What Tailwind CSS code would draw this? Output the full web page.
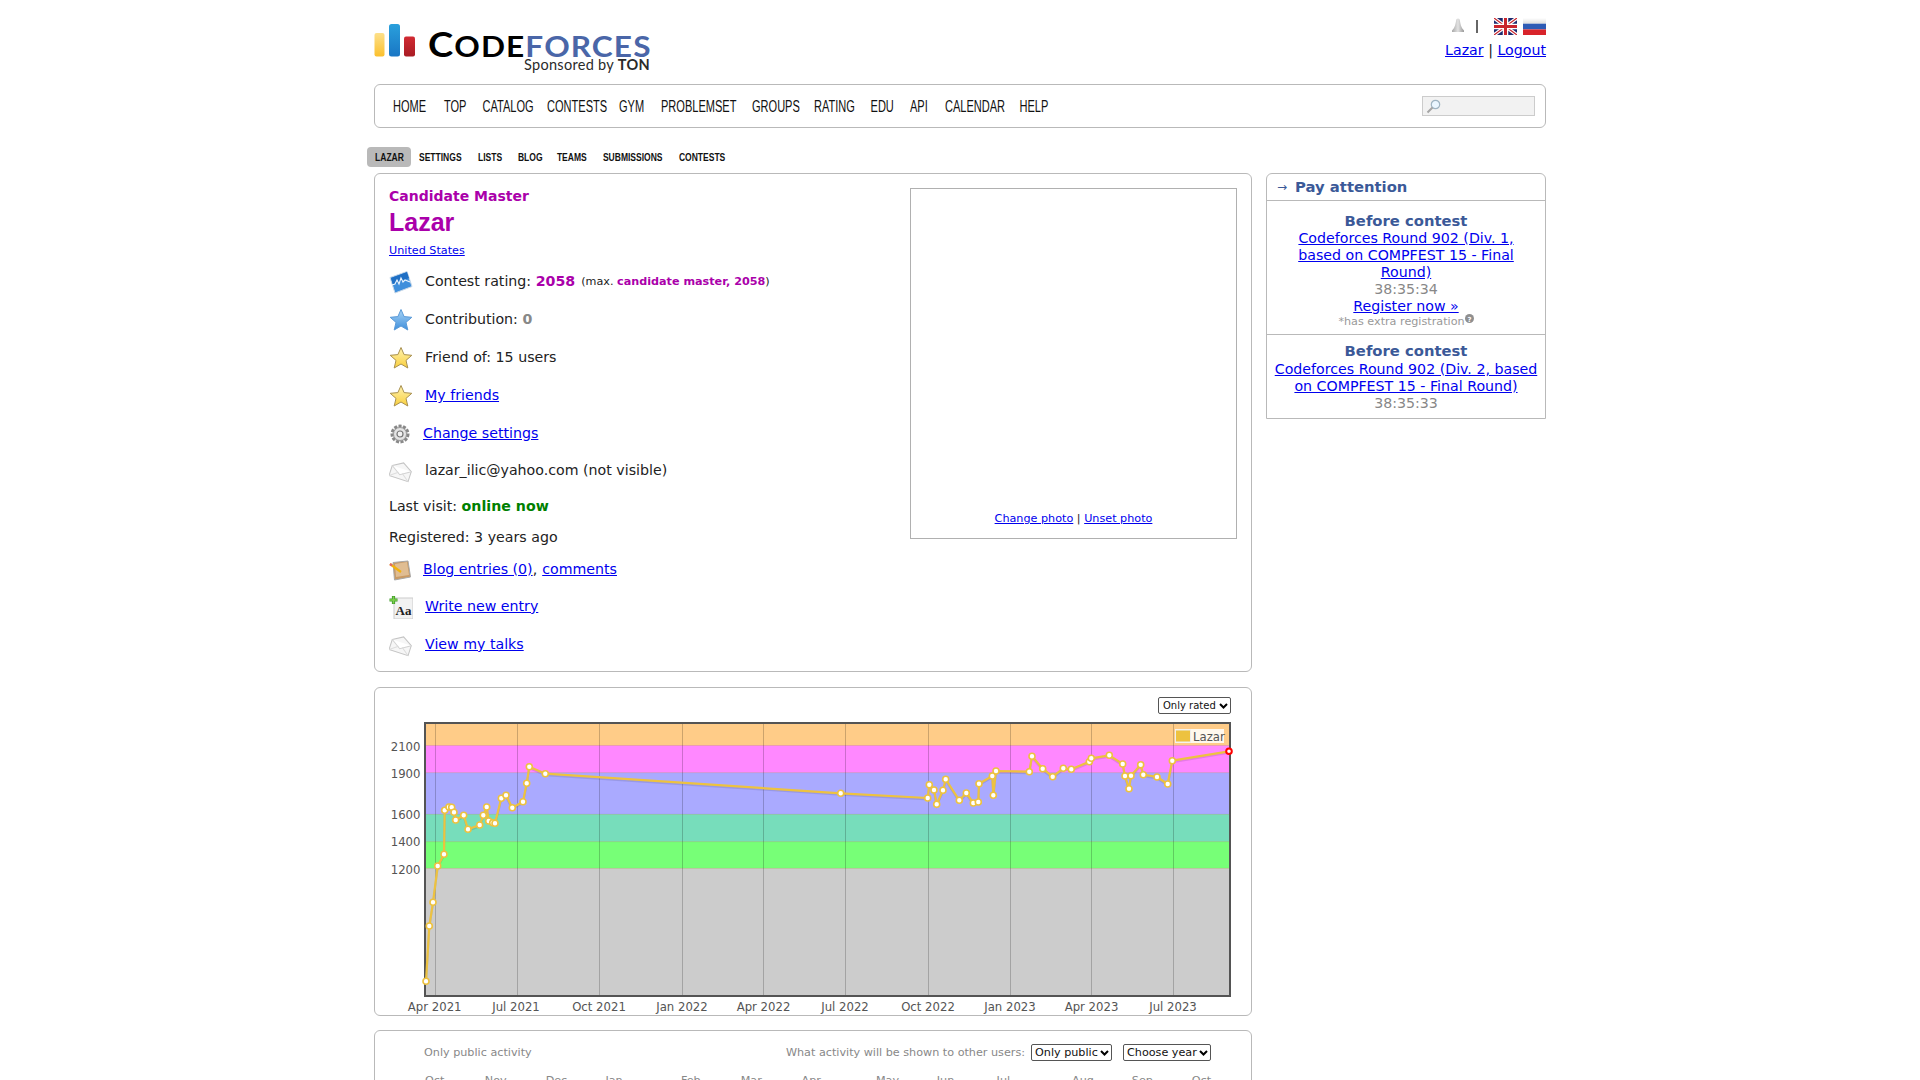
<!DOCTYPE html>
<html><head><meta charset="utf-8"><title>Lazar - Codeforces</title>
<script src="https://cdn.jsdelivr.net/npm/@tailwindcss/browser@4"></script>
</head>
<body class="bg-white overflow-hidden h-[1080px] font-['DejaVu_Sans',sans-serif] text-[14.2px] text-[#222]">
<svg width="0" height="0" class="absolute">
<defs>
<linearGradient id="gy" x1="0" y1="0" x2="0" y2="1"><stop offset="0" stop-color="#fff3b0"/><stop offset="1" stop-color="#f9cf3d"/></linearGradient>
<linearGradient id="gb" x1="0" y1="0" x2="0" y2="1"><stop offset="0" stop-color="#a8d4f6"/><stop offset="1" stop-color="#3f8fdc"/></linearGradient>
<linearGradient id="bar1" x1="0" y1="0" x2="0" y2="1"><stop offset="0" stop-color="#fde08a"/><stop offset="1" stop-color="#fbc02d"/></linearGradient>
<linearGradient id="bar2" x1="0" y1="0" x2="0" y2="1"><stop offset="0" stop-color="#2aa0dc"/><stop offset="1" stop-color="#1976c4"/></linearGradient>
<linearGradient id="bar3" x1="0" y1="0" x2="0" y2="1"><stop offset="0" stop-color="#d22a32"/><stop offset="1" stop-color="#a81c24"/></linearGradient>
<linearGradient id="ru1" x1="0" y1="0" x2="0" y2="1"><stop offset="0" stop-color="#fff"/><stop offset="1" stop-color="#ddd"/></linearGradient>
<linearGradient id="bell" x1="0" y1="0" x2="1" y2="0"><stop offset="0" stop-color="#a8a8a8"/><stop offset=".5" stop-color="#e2e2e2"/><stop offset="1" stop-color="#989898"/></linearGradient>
<symbol id="star" viewBox="0 0 24 24"><path d="M12 1.500l3.100 7.100 7.700.7-5.800 5.100 1.800 7.600-6.800-4-6.800 4 1.800-7.600L1.200 9.300l7.700-.7z" stroke-linejoin="round"/></symbol>
<symbol id="mail" viewBox="0 0 24 24"><g transform="rotate(18 12 12)"><path d="M2 9.500L12 3.500l10 6v10.500H2z" fill="#f6f6f6" stroke="#c4c4c4"/><path d="M2 9.500l10 6.500 10-6.500" fill="#fff" stroke="#d2d2d2"/><path d="M2 20l8-6M22 20l-8-6" stroke="#dcdcdc" fill="none"/></g></symbol>
<symbol id="chev" viewBox="0 0 9 6"><path d="M1 1l3.500 3.500L8 1" fill="none" stroke="#000" stroke-width="2"/></symbol>
</defs>
</svg>
<div class="w-[1172px] ml-[374px]">
  <header class="h-[84px] flex justify-between">
    <div class="relative w-[280px]">
      <svg class="absolute left-0 top-[24px]" width="42" height="33" viewBox="0 0 42 33"><rect x="0.500" y="9" width="10" height="23.500" rx="2" fill="url(#bar1)"/><rect x="15" y="0" width="11" height="32.500" rx="2.500" fill="url(#bar2)"/><rect x="30" y="12.500" width="11" height="20" rx="2" fill="url(#bar3)"/></svg>
      <div class="absolute left-[54px] top-[29px] font-bold whitespace-nowrap leading-[28px] origin-left scale-x-[1.09] font-['Lato',sans-serif] tracking-[1px]"><span class="text-[35px] text-black">C</span><span class="text-[29px] text-black">ODE</span><span class="text-[29px] text-[#4a66a8]">FORCES</span></div>
      <div class="absolute left-[150px] top-[57px] text-[14.500px] leading-[16px] text-[#2a2a2a] font-['Lato',sans-serif] tracking-[0.3px] whitespace-nowrap">Sponsored by <b>TON</b></div>
    </div>
    <div class="flex flex-col items-end pt-[17px]">
      <div class="flex items-center h-[18px]">
        <svg width="16" height="16" viewBox="0 0 16 16"><path d="M8 .5c1.200 0 1.700.8 1.900 2 .5 3.500 1.100 7 4.100 10v1.500H2v-1.500c3-3 3.600-6.500 4.100-10 .2-1.200.7-2 1.900-2z" fill="url(#bell)"/></svg>
        <span class="w-[2px] h-[13px] bg-[#666] ml-[10px] mr-[16px]"></span>
        <svg width="23" height="17" viewBox="0 0 23 17"><rect width="23" height="17" fill="#1d2a6e"/><path d="M0 0l23 17M23 0L0 17" stroke="#fff" stroke-width="3.500"/><path d="M0 0l23 17M23 0L0 17" stroke="#c8242c" stroke-width="1.200"/><path d="M11.500 0v17M0 8.500h23" stroke="#fff" stroke-width="5.500"/><path d="M11.500 0v17M0 8.500h23" stroke="#c8242c" stroke-width="3"/></svg>
        <svg class="ml-[6px]" width="23" height="17" viewBox="0 0 23 17"><rect width="23" height="5.700" fill="url(#ru1)"/><rect y="5.700" width="23" height="5.700" fill="#2d5bb5"/><rect y="11.400" width="23" height="5.600" fill="#d8232a"/></svg>
      </div>
      <div class="mt-[5px] leading-[20px] whitespace-nowrap"><a class="text-[#0000ee] underline">Lazar</a> <span>|</span> <a class="text-[#0000ee] underline">Logout</a></div>
    </div>
  </header>

  <nav class="h-[44px] border border-[#b9b9b9] rounded-[6px] flex items-center justify-between pl-[18px] pr-[10px]">
    <div class="flex origin-left scale-x-[.69] font-['Liberation_Sans',sans-serif] text-[16px] text-[#111] whitespace-nowrap pt-[1px]">
      <span class="w-[73.900px]">HOME</span><span class="w-[55.800px]">TOP</span><span class="w-[93.500px]">CATALOG</span><span class="w-[104.300px]">CONTESTS</span><span class="w-[60.900px]">GYM</span><span class="w-[131.900px]">PROBLEMSET</span><span class="w-[89.900px]">GROUPS</span><span class="w-[81.900px]">RATING</span><span class="w-[57.200px]">EDU</span><span class="w-[50.700px]">API</span><span class="w-[108px]">CALENDAR</span><span>HELP</span>
    </div>
    <div class="w-[113px] h-[20px] bg-[#f2f2f2] border border-[#cccccc] flex items-center pl-[3px]">
      <svg width="15" height="15" viewBox="0 0 15 15"><circle cx="9.500" cy="5.500" r="4.200" fill="#eaf6ff" stroke="#9fb4c2" stroke-width="1.200"/><path d="M6.500 8.500L1.500 13.500" stroke="#a5a5a5" stroke-width="2"/></svg>
    </div>
  </nav>

  <div class="h-[45px] -ml-[7px] pt-[19px] flex font-['Liberation_Sans',sans-serif] font-bold text-[11.500px] text-[#111] whitespace-nowrap">
    <span class="w-[44px] h-[20px] bg-[#b9b9b9] rounded-[4px] flex items-center justify-center pt-[1px]"><span class="inline-block scale-x-[.74]">LAZAR</span></span>
    <div class="ml-[8px] pt-[1px] flex items-center h-[20px] origin-left scale-x-[.74]"><span class="w-[79.700px]">SETTINGS</span><span class="w-[54px]">LISTS</span><span class="w-[52.700px]">BLOG</span><span class="w-[62.200px]">TEAMS</span><span class="w-[102.700px]">SUBMISSIONS</span><span>CONTESTS</span></div>
  </div>

  <div class="flex gap-[14px] items-start">
    <main class="w-[878px] shrink-0">
      <section class="h-[499px] border border-[#b9b9b9] rounded-[6px] px-[14px] flex justify-between relative">
        <div>
          <div class="h-[14px] mt-[15px] leading-[14px] font-bold text-[14px] text-[#aa00aa]">Candidate Master</div>
          <h1 class="h-[30px] mt-[4px] leading-[30px] text-[25px] font-bold text-[#aa00aa] font-['Liberation_Sans',sans-serif]">Lazar</h1>
          <div class="mt-[7px] h-[14px] leading-[14px] text-[11.200px]"><a class="text-[#0000ee] underline">United States</a></div>
          <div class="mt-[5px] h-[38px] flex items-center">
            <svg width="24" height="24" viewBox="0 0 24 24"><path d="M1 7.500L18 1.500l5 15L6 23z" fill="#3f8fdc" stroke="#c8d8e8"/><path d="M2 8l16-6 2 6-16 7z" fill="#1f6fc4"/><path d="M3 15l3-1 2-4 2 4 2-6 2 4 2-2 5 2" stroke="#e8f4ff" stroke-width="1.200" fill="none"/></svg>
            <span class="ml-[12px]">Contest rating:&nbsp;</span><b class="text-[#aa00aa] text-[14.200px]">2058</b><span class="text-[11.200px] ml-[6px]">(max.&nbsp;<b class="text-[#aa00aa]">candidate master, 2058</b>)</span>
          </div>
          <div class="h-[38px] flex items-center"><svg width="24" height="24" class="fill-[url(#gb)] stroke-[#5a9ad8]"><use href="#star"/></svg><span class="ml-[12px]">Contribution:&nbsp;</span><b class="text-[#888]">0</b></div>
          <div class="h-[38px] flex items-center"><svg width="24" height="24" class="fill-[url(#gy)] stroke-[#a89050]"><use href="#star"/></svg><span class="ml-[12px]">Friend of: 15 users</span></div>
          <div class="h-[38px] flex items-center"><svg width="24" height="24" class="fill-[url(#gy)] stroke-[#a89050]"><use href="#star"/></svg><a class="ml-[12px] text-[#0000ee] underline">My friends</a></div>
          <div class="h-[37px] flex items-center"><svg width="22" height="22" viewBox="0 0 22 22"><circle cx="11" cy="11" r="8" fill="#d8d8d8" stroke="#888" stroke-width="3" stroke-dasharray="3 1.500"/><circle cx="11" cy="11" r="6.500" fill="#e4e4e4" stroke="#8c8c8c" stroke-width=".8"/><circle cx="11" cy="11" r="3" fill="#f2f2f2" stroke="#777" stroke-width="1.200"/></svg><a class="ml-[12px] text-[#0000ee] underline">Change settings</a></div>
          <div class="h-[37px] flex items-center"><svg width="24" height="24"><use href="#mail"/></svg><span class="ml-[12px]">lazar_ilic@yahoo.com (not visible)</span></div>
          <div class="h-[35px] flex items-center"><span>Last visit:&nbsp;</span><b class="text-[#008000]">online now</b></div>
          <div class="h-[28px] flex items-center">Registered: 3 years ago</div>
          <div class="h-[35px] flex items-center"><svg width="22" height="22" viewBox="0 0 22 22"><path d="M4 3.500l15-1.500 2.500 16-16 3z" fill="#c99a64" stroke="#a8a8a8"/><path d="M6 5l12-2 2 13-13 2z" fill="#e0bd92"/><path d="M1 5l11 8" stroke="#f2b20c" stroke-width="2.200"/><path d="M1 5l2 1.500" stroke="#d66" stroke-width="2.200"/></svg><a class="ml-[12px] text-[#0000ee] underline">Blog entries (0)</a>,<a class="ml-[5px] text-[#0000ee] underline">comments</a></div>
          <div class="h-[39px] flex items-center"><svg width="24" height="24" viewBox="0 0 24 24"><rect x="5" y="3" width="19" height="21" fill="#f2f2f2" stroke="#ccc"/><text x="6.500" y="20" font-family="Liberation Serif" font-weight="700" font-size="13" fill="#222">Aa</text><path d="M4.500 1v8M.5 5h8" stroke="#3e9a28" stroke-width="3.200"/><path d="M4.500 1.500v7M1 5h7" stroke="#7fd04e" stroke-width="1.600"/></svg><a class="ml-[12px] text-[#0000ee] underline">Write new entry</a></div>
          <div class="h-[37px] flex items-center"><svg width="24" height="24"><use href="#mail"/></svg><a class="ml-[12px] text-[#0000ee] underline">View my talks</a></div>
        </div>
        <div class="w-[327px] h-[351px] mt-[14px] border border-[#b0b0b0] flex flex-col justify-end items-center pb-[12px] text-[11.200px]">
          <div class="leading-[14px]"><a class="text-[#0000ee] underline">Change photo</a> | <a class="text-[#0000ee] underline">Unset photo</a></div>
        </div>
      </section>

      <section class="mt-[15px] h-[329px] border border-[#b9b9b9] rounded-[6px] px-[5px] pt-[9px]">
        <div class="flex justify-end pr-[15px] h-[17px]">
          <div class="relative w-[73px] h-[17px]">
            <select class="block appearance-none w-full h-full border border-[#555] rounded-[2px] bg-white text-[10px] leading-none pl-[4px] text-[#111]"><option>Only rated</option></select>
            <svg class="absolute right-[3px] top-[6px] pointer-events-none" width="9" height="6"><use href="#chev"/></svg>
          </div>
        </div>
        <svg class="mt-[2px]" width="866" height="299" viewBox="380 715 866 299" font-family="DejaVu Sans" font-size="11.700" fill="#545454">
          <rect x="425" y="722" width="805" height="273" fill="#ffcc88"/>
          <rect x="425" y="744.500" width="805" height="27.200" fill="#ff88ff"/>
          <rect x="425" y="771.700" width="805" height="41.600" fill="#aaaaff"/>
          <rect x="425" y="813.300" width="805" height="27.400" fill="#77ddbb"/>
          <rect x="425" y="840.700" width="805" height="26.700" fill="#77ff77"/>
          <rect x="425" y="867.400" width="805" height="127.600" fill="#cccccc"/>
          <path d="M425 744.500h805M425 771.700h805M425 813.300h805M425 840.700h805M425 867.400h805" stroke="#000" stroke-opacity=".08"/>
          <path d="M435.500 722v273M517.500 722v273M599.500 722v273M682.500 722v273M763.500 722v273M845.500 722v273M928.500 722v273M1010.500 722v273M1091.500 722v273M1173.500 722v273" stroke="#000" stroke-opacity=".2" fill="none"/>
          <rect x="425" y="722" width="805" height="273" fill="none" stroke="#545454" stroke-width="2"/>
          <g text-anchor="end"><text x="420.500" y="750">2100</text><text x="420.500" y="777">1900</text><text x="420.500" y="818">1600</text><text x="420.500" y="845">1400</text><text x="420.500" y="873">1200</text></g>
          <g text-anchor="middle"><text x="434.700" y="1010">Apr 2021</text><text x="516" y="1010">Jul 2021</text><text x="599" y="1010">Oct 2021</text><text x="682" y="1010">Jan 2022</text><text x="763.500" y="1010">Apr 2022</text><text x="845" y="1010">Jul 2022</text><text x="928" y="1010">Oct 2022</text><text x="1010" y="1010">Jan 2023</text><text x="1091.500" y="1010">Apr 2023</text><text x="1173" y="1010">Jul 2023</text></g>
          <rect x="1175" y="728" width="49" height="14" fill="#fff" fill-opacity=".85"/>
          <rect x="1175.500" y="729" width="15" height="12" fill="#edc240" stroke="#eee"/>
          <text x="1193" y="740">Lazar</text>
          <polyline fill="none" stroke="#000" stroke-opacity=".1" stroke-width="2" transform="translate(0 1.500)" points="426,980.300 429.300,925 433,901.300 437.700,865 444,853.300 444.700,809.300 449,806 451.700,806.300 454,811.300 455.700,819 463.700,814.300 468,828.300 479.700,824 483.300,814.300 486.700,806 488.700,820 492.700,821.700 495,822.300 501.300,797.300 506,794.300 512.300,806.700 523,800.700 526.700,782.300 529.300,765.700 545.300,772.700 840.700,792.300 927.700,797 929.300,783.700 934,789 936.700,803.300 943,789.300 945.700,778.300 959.300,799.300 966.300,792 973.300,802 978.300,801 979,782.700 992.300,775 993.300,794.300 996,770 1029.300,770.700 1032,755.300 1042.700,767.700 1052.700,775.700 1063.300,767.300 1071.300,768.300 1089.300,760.700 1091.300,757.300 1109.300,754.300 1122.700,763 1125,775 1129,787.700 1131,774.700 1140.700,763.700 1143.300,773.700 1157,776 1167.700,783 1172.300,759.700 1229,750.300"/>
          <polyline fill="none" stroke="#edc240" stroke-width="2.200" stroke-linejoin="round" points="426,980.300 429.300,925 433,901.300 437.700,865 444,853.300 444.700,809.300 449,806 451.700,806.300 454,811.300 455.700,819 463.700,814.300 468,828.300 479.700,824 483.300,814.300 486.700,806 488.700,820 492.700,821.700 495,822.300 501.300,797.300 506,794.300 512.300,806.700 523,800.700 526.700,782.300 529.300,765.700 545.300,772.700 840.700,792.300 927.700,797 929.300,783.700 934,789 936.700,803.300 943,789.300 945.700,778.300 959.300,799.300 966.300,792 973.300,802 978.300,801 979,782.700 992.300,775 993.300,794.300 996,770 1029.300,770.700 1032,755.300 1042.700,767.700 1052.700,775.700 1063.300,767.300 1071.300,768.300 1089.300,760.700 1091.300,757.300 1109.300,754.300 1122.700,763 1125,775 1129,787.700 1131,774.700 1140.700,763.700 1143.300,773.700 1157,776 1167.700,783 1172.300,759.700 1229,750.300"/>
          <g fill="#fff" stroke="#edc240" stroke-width="1.600">
            <circle cx="426" cy="980.300" r="3"/><circle cx="429.300" cy="925" r="3"/><circle cx="433" cy="901.300" r="3"/><circle cx="437.700" cy="865" r="3"/><circle cx="444" cy="853.300" r="3"/><circle cx="444.700" cy="809.300" r="3"/><circle cx="449" cy="806" r="3"/><circle cx="451.700" cy="806.300" r="3"/><circle cx="454" cy="811.300" r="3"/><circle cx="455.700" cy="819" r="3"/><circle cx="463.700" cy="814.300" r="3"/><circle cx="468" cy="828.300" r="3"/><circle cx="479.700" cy="824" r="3"/><circle cx="483.300" cy="814.300" r="3"/><circle cx="486.700" cy="806" r="3"/><circle cx="488.700" cy="820" r="3"/><circle cx="492.700" cy="821.700" r="3"/><circle cx="495" cy="822.300" r="3"/><circle cx="501.300" cy="797.300" r="3"/><circle cx="506" cy="794.300" r="3"/><circle cx="512.300" cy="806.700" r="3"/><circle cx="523" cy="800.700" r="3"/><circle cx="526.700" cy="782.300" r="3"/><circle cx="529.300" cy="765.700" r="3"/><circle cx="545.300" cy="772.700" r="3"/><circle cx="840.700" cy="792.300" r="3"/><circle cx="927.700" cy="797" r="3"/><circle cx="929.300" cy="783.700" r="3"/><circle cx="934" cy="789" r="3"/><circle cx="936.700" cy="803.300" r="3"/><circle cx="943" cy="789.300" r="3"/><circle cx="945.700" cy="778.300" r="3"/><circle cx="959.300" cy="799.300" r="3"/><circle cx="966.300" cy="792" r="3"/><circle cx="973.300" cy="802" r="3"/><circle cx="978.300" cy="801" r="3"/><circle cx="979" cy="782.700" r="3"/><circle cx="992.300" cy="775" r="3"/><circle cx="993.300" cy="794.300" r="3"/><circle cx="996" cy="770" r="3"/><circle cx="1029.300" cy="770.700" r="3"/><circle cx="1032" cy="755.300" r="3"/><circle cx="1042.700" cy="767.700" r="3"/><circle cx="1052.700" cy="775.700" r="3"/><circle cx="1063.300" cy="767.300" r="3"/><circle cx="1071.300" cy="768.300" r="3"/><circle cx="1089.300" cy="760.700" r="3"/><circle cx="1091.300" cy="757.300" r="3"/><circle cx="1109.300" cy="754.300" r="3"/><circle cx="1122.700" cy="763" r="3"/><circle cx="1125" cy="775" r="3"/><circle cx="1129" cy="787.700" r="3"/><circle cx="1131" cy="774.700" r="3"/><circle cx="1140.700" cy="763.700" r="3"/><circle cx="1143.300" cy="773.700" r="3"/><circle cx="1157" cy="776" r="3"/><circle cx="1167.700" cy="783" r="3"/><circle cx="1172.300" cy="759.700" r="3"/>
          </g>
          <circle cx="1229" cy="750.300" r="2.800" fill="#fff" stroke="#ff0000" stroke-width="2"/>
        </svg>
      </section>

      <section class="mt-[14px] h-[200px] border border-[#b9b9b9] rounded-[6px] pl-[49px] pr-[40px] pt-[12px] text-[11.200px] text-[#888]">
        <div class="flex justify-between items-center h-[19px]">
          <span class="mt-[2px]">Only public activity</span>
          <div class="flex items-center"><span class="mr-[6px] mt-[2px]">What activity will be shown to other users:</span>
            <div class="relative w-[81px] h-[17px]">
              <select class="block appearance-none w-full h-full border border-[#555] rounded-[2px] bg-white text-[#111] text-[11.200px] leading-none pl-[3px]"><option>Only public</option></select>
              <svg class="absolute right-[3px] top-[6px] pointer-events-none" width="9" height="6"><use href="#chev"/></svg>
            </div>
            <div class="relative w-[88px] h-[17px] ml-[11px]">
              <select class="block appearance-none w-full h-full border border-[#555] rounded-[2px] bg-white text-[#111] text-[11.200px] leading-none pl-[3px]"><option>Choose year</option></select>
              <svg class="absolute right-[3px] top-[6px] pointer-events-none" width="9" height="6"><use href="#chev"/></svg>
            </div>
          </div>
        </div>
        <div class="flex mt-[12px] ml-[1px] whitespace-nowrap leading-[14px]">
          <span class="w-[61.300px]">Oct</span><span class="w-[62.300px]">Nov</span><span class="w-[61.300px]">Dec</span><span class="w-[77.300px]">Jan</span><span class="w-[61.300px]">Feb</span><span class="w-[62.300px]">Mar</span><span class="w-[76.300px]">Apr</span><span class="w-[62.300px]">May</span><span class="w-[61.300px]">Jun</span><span class="w-[77.300px]">Jul</span><span class="w-[61.300px]">Aug</span><span class="w-[61.300px]">Sep</span><span>Oct</span>
        </div>
      </section>
    </main>

    <aside class="w-[280px] border border-[#b9b9b9] rounded-t-[6px] h-[246px]">
      <div class="h-[27px] border-b border-[#b9b9b9] flex items-center pl-[10px] font-bold text-[#3b5998]"><span class="text-[12px] mr-[8px] font-normal">→</span><span class="text-[14.800px]">Pay attention</span></div>
      <div class="h-[134px] border-b border-[#b9b9b9] flex flex-col items-center text-center pt-[11px] px-[10px] leading-[17px]">
        <b class="text-[#3b5998] text-[14.800px] mb-[1px]">Before contest</b>
        <a class="text-[#0000ee] underline">Codeforces Round 902 (Div. 1, based on COMPFEST 15 - Final Round)</a>
        <span class="text-[#888]">38:35:34</span>
        <a class="text-[#0000ee] underline">Register now »</a>
        <span class="text-[#999] text-[11.200px] leading-[13px] flex items-start">*has extra registration<svg class="-mt-[1px]" width="9" height="9" viewBox="0 0 9 9"><circle cx="4.500" cy="4.500" r="4.500" fill="#8f8f8f"/><text x="4.500" y="7.500" text-anchor="middle" font-size="7" font-weight="700" fill="#fff" font-family="DejaVu Sans">?</text></svg></span>
      </div>
      <div class="flex flex-col items-center text-center pt-[7px] px-[6px] leading-[17px]">
        <b class="text-[#3b5998] text-[14.800px] mb-[2px]">Before contest</b>
        <a class="text-[#0000ee] underline">Codeforces Round 902 (Div. 2, based on COMPFEST 15 - Final Round)</a>
        <span class="text-[#888]">38:35:33</span>
      </div>
    </aside>
  </div>
</div>
</body></html>
